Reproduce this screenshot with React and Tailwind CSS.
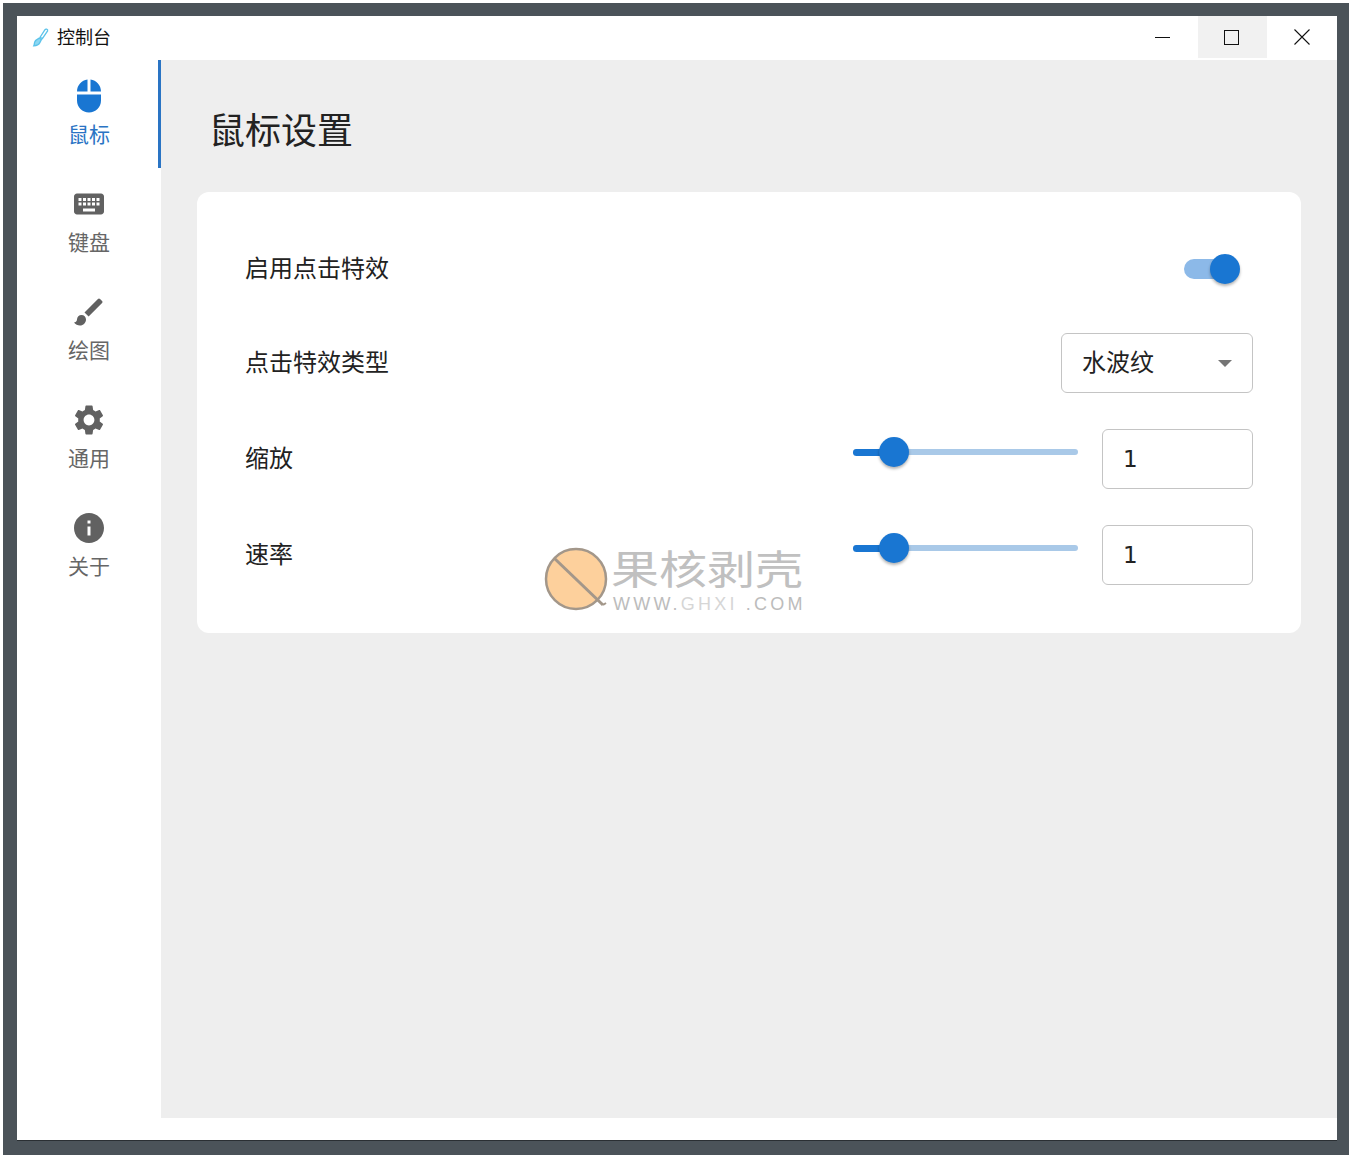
import React from "react";

const cjk = { fontFamily: '"Noto Sans CJK SC", "Noto Sans", sans-serif' };

const paths = {
  mouse: "M13 1.07V9h7c0-4.08-3.05-7.44-7-7.93zM4 15c0 4.42 3.58 8 8 8s8-3.58 8-8v-4H4v4zm7-13.93C7.05 1.56 4 4.92 4 9h7V1.07z",
  keyboard: "M20 5H4c-1.1 0-1.99.9-1.99 2L2 17c0 1.1.9 2 2 2h16c1.1 0 2-.9 2-2V7c0-1.1-.9-2-2-2zm-9 3h2v2h-2V8zm0 3h2v2h-2v-2zM8 8h2v2H8V8zm0 3h2v2H8v-2zm-1 2H5v-2h2v2zm0-3H5V8h2v2zm9 7H8v-2h8v2zm0-4h-2v-2h2v2zm0-3h-2V8h2v2zm3 3h-2v-2h2v2zm0-3h-2V8h2v2z",
  brush: "M7 14c-1.66 0-3 1.34-3 3 0 1.31-1.16 2-2 2 .92 1.22 2.49 2 4 2 2.21 0 4-1.79 4-4 0-1.66-1.34-3-3-3zm13.71-9.37l-1.34-1.34a.9959.9959 0 0 0-1.41 0L9 12.25 11.75 15l8.96-8.96c.39-.39.39-1.02 0-1.41z",
  settings: "M19.14 12.94c.04-.3.06-.61.06-.94 0-.32-.02-.64-.07-.94l2.03-1.58c.18-.14.23-.41.12-.61l-1.92-3.32c-.12-.22-.37-.29-.59-.22l-2.39.96c-.5-.38-1.03-.7-1.62-.94l-.36-2.54c-.04-.24-.24-.41-.48-.41h-3.84c-.24 0-.43.17-.47.41l-.36 2.54c-.59.24-1.13.57-1.62.94l-2.39-.96c-.22-.08-.47 0-.59.22L2.74 8.87c-.12.21-.08.47.12.61l2.03 1.58c-.05.3-.09.63-.09.94s.02.64.07.94l-2.03 1.58c-.18.14-.23.41-.12.61l1.92 3.32c.12.22.37.29.59.22l2.39-.96c.5.38 1.03.7 1.62.94l.36 2.54c.05.24.24.41.48.41h3.84c.24 0 .44-.17.47-.41l.36-2.54c.59-.24 1.13-.56 1.62-.94l2.39.96c.22.08.47 0 .59-.22l1.92-3.32c.12-.22.07-.47-.12-.61l-2.01-1.58zM12 15.6c-1.98 0-3.6-1.62-3.6-3.6s1.62-3.6 3.6-3.6 3.6 1.62 3.6 3.6-1.62 3.6-3.6 3.6z",
  info: "M12 2C6.48 2 2 6.48 2 12s4.48 10 10 10 10-4.48 10-10S17.52 2 12 2zm1 15h-2v-6h2v6zm0-8h-2V7h2v2z",
};

function NavItem({ icon, label, active }) {
  return (
    <div
      className={`h-[108px] flex flex-col items-center pt-[18px] pl-[3px] border-r-[3px] ${
        active ? "border-[#2a74c4] text-[#2a74c4]" : "border-transparent text-[#666666]"
      }`}
    >
      <svg viewBox="0 0 24 24" className={`w-9 h-9 ${active ? "text-[#1976d2]" : "text-[#616161]"}`} fill="currentColor">
        <path d={paths[icon]} />
      </svg>
      <span className="text-[21px] leading-[30px] mt-1">{label}</span>
    </div>
  );
}

function SliderBox() {
  return (
    <div className="flex items-start">
      <div className="relative w-[225px] h-[46px] flex items-center">
        <div className="w-full h-[6px] rounded-full bg-[#a9c9e8]" />
        <div className="absolute left-0 w-[41px] h-[7px] rounded-l-full bg-[#1976d2]" />
        <div className="absolute left-[26px] w-[30px] h-[30px] rounded-full bg-[#1976d2] shadow-[0_2px_3px_rgba(0,0,0,0.3)]" />
      </div>
      <div className="ml-6 w-[151px] h-[60px] rounded-[6px] border border-[#c4c4c4] flex items-center pl-5 text-[23px] text-[#222222] [font-family:'DejaVu_Sans',sans-serif]">
        1
      </div>
    </div>
  );
}

function Row({ label, children }) {
  return (
    <div className="flex items-center justify-between">
      <span className="text-[24px] leading-[36px] pb-1 text-[#222222]">{label}</span>
      {children}
    </div>
  );
}

export default function App() {
  return (
    <div className="w-[1351px] h-[1158px] bg-white pl-[3px] pt-[3px] pr-[2px] pb-[3px]" style={cjk}>
      <div className="w-full h-full bg-[#4b5359] pl-[14px] pt-[13px] pr-3 pb-[14px]">
        <div className="w-full h-full bg-white flex flex-col border-b border-[#2a2f33]">
          <header className="h-[44px] shrink-0 flex items-center">
            <svg viewBox="0 0 18 20" className="ml-[15px] mb-[2px] w-[17px] h-[19px]" fill="none" stroke="#5cc3ea" strokeWidth="1.4">
              <path d="M15.5 1.2c.9.3 1.3 1 1 1.9L11 11.2 8.6 9.7 13.6 1.9c.4-.6 1.2-.9 1.9-.7z" />
              <path d="M7.6 10.6 10 12.2 8.3 15.4c-.8 1.6-3 3.2-6.4 3.3.7-1.4.5-2.7 1-4 .6-1.6 2.4-2.9 4.7-4.1z" fill="#8cd7f2" />
            </svg>
            <span className="ml-2 pb-1 text-[18px] text-[#111111]">控制台</span>
            <div className="ml-auto flex h-full">
              <div className="w-[69px] h-[42px] pr-[2px] flex items-center justify-center">
                <div className="w-[15px] h-px bg-[#111111]" />
              </div>
              <div className="w-[69px] h-[42px] pr-[2px] bg-[#f1f1f1] flex items-center justify-center">
                <div className="w-[15px] h-[15px] border border-[#111111]" />
              </div>
              <div className="w-[70px] h-[42px] flex items-center justify-center">
                <svg viewBox="0 0 16 16" className="w-4 h-4" stroke="#111111" strokeWidth="1.1">
                  <path d="M.5.5l15 15M15.5.5l-15 15" />
                </svg>
              </div>
            </div>
          </header>
          <div className="flex-1 flex min-h-0">
            <nav className="w-[144px] shrink-0">
              <NavItem icon="mouse" label="鼠标" active />
              <NavItem icon="keyboard" label="键盘" />
              <NavItem icon="brush" label="绘图" />
              <NavItem icon="settings" label="通用" />
              <NavItem icon="info" label="关于" />
            </nav>
            <main className="flex-1 mb-[22px] bg-[#eeeeee] pt-[41px] px-9">
              <h1 className="ml-3 text-[36px] leading-[54px] text-[#222222]">鼠标设置</h1>
              <section className="relative mt-[37px] h-[441px] bg-white rounded-xl p-12 flex flex-col gap-9">
                <Row label="启用点击特效">
                  <div className="relative w-[56px] h-[57px] mr-[13px] flex items-center">
                    <div className="w-[52px] h-5 rounded-full bg-[#8cb9e8]" />
                    <div className="absolute right-0 w-[30px] h-[30px] rounded-full bg-[#1976d2] shadow-[0_2px_3px_rgba(0,0,0,0.3)]" />
                  </div>
                </Row>
                <Row label="点击特效类型">
                  <div className="w-[192px] h-[60px] rounded-[6px] border border-[#c4c4c4] flex items-center justify-between pl-5 pr-[20px] text-[24px] text-[#222222]">
                    <span className="pb-1">水波纹</span>
                    <div className="w-0 h-0 border-x-[7px] border-x-transparent border-t-[7px] border-t-[#757575]" />
                  </div>
                </Row>
                <Row label="缩放"><SliderBox /></Row>
                <Row label="速率"><SliderBox /></Row>

                <div className="absolute left-[347px] top-[354px] w-[262px] h-[66px] flex items-start">
                  <svg viewBox="0 0 64 66" className="w-[64px] h-[66px] shrink-0">
                    <circle cx="32" cy="33" r="30" fill="#fdd09c" stroke="#a3978a" strokeWidth="2.5" />
                    <path d="M10 12l49 47" stroke="#a3978a" strokeWidth="3" />
                    <path d="M59 59l3-2" stroke="#a3978a" strokeWidth="2" />
                  </svg>
                  <div className="ml-[3px] flex flex-col">
                    <div className="text-[48px] leading-[44px] mt-[2px] font-normal text-[#c0c0c0] whitespace-nowrap scale-y-[0.84] origin-top">果核剥壳</div>
                    <div className="text-[18px] leading-[18px] tracking-[3.2px] mt-[3px] ml-[2px] whitespace-nowrap text-[#bcbcbc] [font-family:'Liberation_Sans',sans-serif]">
                      WWW.<span className="text-[#d6d6d6]">GHXI</span> .COM
                    </div>
                  </div>
                </div>
              </section>
            </main>
          </div>
        </div>
      </div>
    </div>
  );
}
